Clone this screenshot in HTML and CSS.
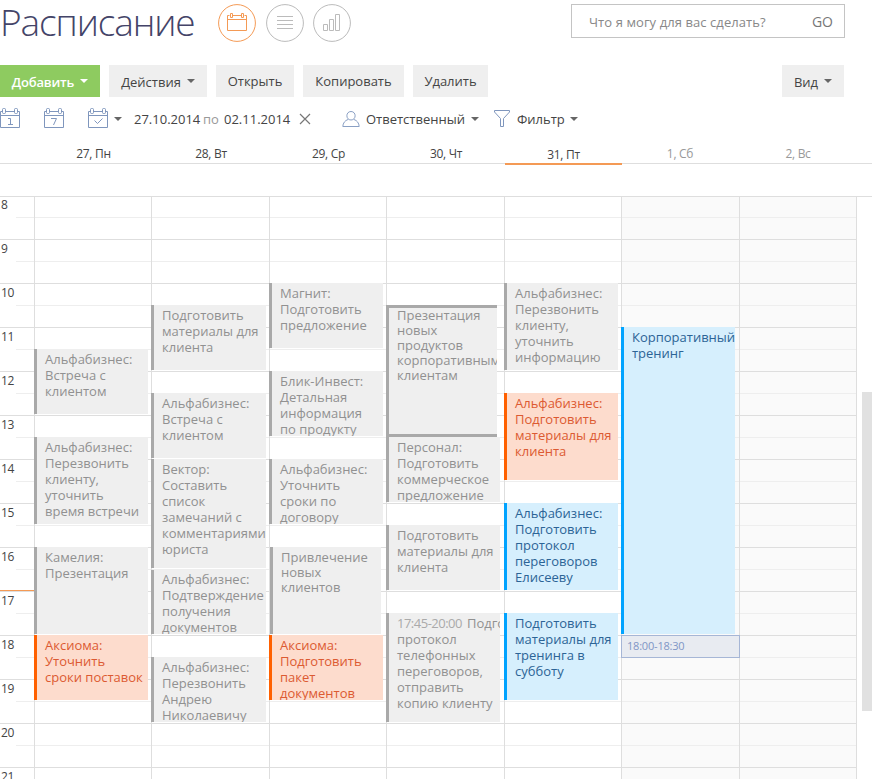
FILE: index.html
```html
<!DOCTYPE html>
<html lang="ru">
<head>
<meta charset="utf-8">
<title>Расписание</title>
<link rel="stylesheet" href="styles.css">
</head>
<body>
<div class="page">
  <header class="top">
    <h1 class="title">Расписание</h1>
    <nav class="views">
      <a class="view active"><svg width="38" height="38" viewBox="0 0 38 38"><circle cx="19" cy="19" r="18.4"/><path d="M11.500 11.500H9.500V26.500H28.500V11.500H26.500M14.500 11.500H23.500M9.500 15.500H28.500M12.500 9.500h2v4h-2zM23.500 9.500h2v4h-2z"/></svg></a>
      <a class="view"><svg width="38" height="38" viewBox="0 0 38 38"><circle cx="19" cy="19" r="18.400"/><path d="M11 12.500H27M11 16.500H27M11 20.500H27M11 24.500H27"/></svg></a>
      <a class="view"><svg width="38" height="38" viewBox="0 0 38 38"><circle cx="19" cy="19" r="18.400"/><path d="M10.500 20.500h4v6h-4zM16.500 15.500h4v11h-4zM22.500 10.500h4v16h-4z"/></svg></a>
    </nav>
    <div class="search"><span class="hint">Что я могу для вас сделать?</span><span class="go">GO</span></div>
  </header>

  <div class="actions">
    <button class="btn primary b1"><span>Добавить</span><i class="caret"></i></button>
    <button class="btn b2"><span>Действия</span><i class="caret"></i></button>
    <button class="btn b3">Открыть</button>
    <button class="btn b4">Копировать</button>
    <button class="btn b5">Удалить</button>
    <button class="btn view-btn"><span>Вид</span><i class="caret"></i></button>
  </div>

  <div class="filters">
    <svg class="cal" width="20" height="21" viewBox="0 0 20 21"><path d="M2.500 3.500H.5V19.500H19.500V3.500H17.500M5.500 3.500H14.500M.5 7.500H19.500M2.500 1.500q0-1 1-1h1q1 0 1 1v3q0 1-1 1h-1q-1 0-1-1zM14.500 1.500q0-1 1-1h1q1 0 1 1v3q0 1-1 1h-1q-1 0-1-1zM8 10.500h2.500V16.500M8 16.500h5"/></svg>
    <svg class="cal" width="20" height="21" viewBox="0 0 20 21"><path d="M2.500 3.500H.5V19.500H19.500V3.500H17.500M5.500 3.500H14.500M.5 7.500H19.500M2.500 1.500q0-1 1-1h1q1 0 1 1v3q0 1-1 1h-1q-1 0-1-1zM14.500 1.500q0-1 1-1h1q1 0 1 1v3q0 1-1 1h-1q-1 0-1-1zM7 10.500h5.500L9.500 17"/></svg>
    <svg class="cal last" width="20" height="21" viewBox="0 0 20 21"><path d="M2.500 3.500H.5V19.500H19.500V3.500H17.500M5.500 3.500H14.500M.5 7.500H19.500M2.500 1.500q0-1 1-1h1q1 0 1 1v3q0 1-1 1h-1q-1 0-1-1zM14.500 1.500q0-1 1-1h1q1 0 1 1v3q0 1-1 1h-1q-1 0-1-1zM6.500 12.500L9.500 15.500L14.500 10.500"/></svg>
    <i class="caret"></i>
    <span class="date from">27.10.2014</span>
    <span class="to">по</span>
    <span class="date until">02.11.2014</span>
    <svg class="clear" width="12" height="12" viewBox="0 0 12 12"><path d="M1 1L11 11M11 1L1 11"/></svg>
    <svg class="person" width="18" height="18" viewBox="0 0 18 18"><path d="M9 1.500c5.500 0 5.500 8.500 0 8.500s-5.500-8.500 0-8.500zM6 9.500C3 10.500 1 13 .8 16.500H17.200C17 13 15 10.500 12 9.500"/></svg>
    <span class="owner">Ответственный</span>
    <i class="caret"></i>
    <svg class="funnel" width="16" height="17" viewBox="0 0 16 17"><path d="M.5 .5H15.500V2L9.500 8.500V16.500H6.500V8.500L.5 2z"/></svg>
    <span class="filter">Фильтр</span>
    <i class="caret"></i>
  </div>

  <div class="days">
    <span></span><span>27, Пн</span><span>28, Вт</span><span>29, Ср</span><span>30, Чт</span><span class="today">31, Пт</span><span class="off">1, Сб</span><span class="off">2, Вс</span>
  </div>

  <div class="board">
    <div class="grid">
      <div class="hours">
        <span>8</span><span>9</span><span>10</span><span>11</span><span>12</span><span>13</span><span>14</span><span>15</span><span>16</span><span>17</span><span>18</span><span>19</span><span>20</span><span>21</span>
        <i class="now"></i>
      </div>
      <div class="day">
        <div class="ev r8 s3">Альфабизнес:<br>Встреча с<br>клиентом</div>
        <div class="ev r12 s4">Альфабизнес:<br>Перезвонить<br>клиенту,<br>уточнить<br>время встречи</div>
        <div class="ev r17 s4">Камелия:<br>Презентация</div>
        <div class="ev r21 s3 orange">Аксиома:<br>Уточнить<br>сроки поставок</div>
      </div>
      <div class="day">
        <div class="ev r6 s3">Подготовить<br>материалы для<br>клиента</div>
        <div class="ev r10 s3">Альфабизнес:<br>Встреча с<br>клиентом</div>
        <div class="ev r13 s5">Вектор:<br>Составить<br>список<br>замечаний с<br>комментариями<br>юриста</div>
        <div class="ev r18 s3 late">Альфабизнес:<br>Подтверждение<br>получения<br>документов</div>
        <div class="ev r22 s3">Альфабизнес:<br>Перезвонить<br>Андрею<br>Николаевичу</div>
      </div>
      <div class="day">
        <div class="ev r5 s3">Магнит:<br>Подготовить<br>предложение</div>
        <div class="ev r9 s3">Блик-Инвест:<br>Детальная<br>информация<br>по продукту</div>
        <div class="ev r13 s3">Альфабизнес:<br>Уточнить<br>сроки по<br>договору</div>
        <div class="ev r17 s4 inset">Привлечение<br>новых<br>клиентов</div>
        <div class="ev r21 s3 orange">Аксиома:<br>Подготовить<br>пакет<br>документов</div>
      </div>
      <div class="day wide">
        <div class="ev r6 s6 selected">Презентация<br>новых<br>продуктов<br>корпоративным<br>клиентам</div>
        <div class="ev r12 s3">Персонал:<br>Подготовить<br>коммерческое<br>предложение</div>
        <div class="ev r16 s3">Подготовить<br>материалы для<br>клиента</div>
        <div class="ev r20 s5"><span class="time">17:45-20:00</span>Подготовить<br>протокол<br>телефонных<br>переговоров,<br>отправить<br>копию клиенту</div>
      </div>
      <div class="day">
        <div class="ev r5 s4">Альфабизнес:<br>Перезвонить<br>клиенту,<br>уточнить<br>информацию</div>
        <div class="ev r10 s4 orange">Альфабизнес:<br>Подготовить<br>материалы для<br>клиента</div>
        <div class="ev r15 s4 blue">Альфабизнес:<br>Подготовить<br>протокол<br>переговоров<br>Елисееву</div>
        <div class="ev r20 s4 blue">Подготовить<br>материалы для<br>тренинга в<br>субботу</div>
      </div>
      <div class="day wide weekend">
        <div class="ev r7 s14 blue">Корпоративный<br>тренинг</div>
        <div class="slot r21">18:00-18:30</div>
      </div>
      <div class="day weekend last"></div>
    </div>
    <div class="track"><div class="thumb"></div></div>
  </div>
</div>
</body>
</html>
```
FILE: styles.css
```css
* { box-sizing: border-box; }
body { margin: 0; background: #fff; overflow: hidden; font-family: "Open Sans", "Noto Sans", sans-serif; font-size: 13px; color: #444; }
.page { width: 872px; height: 779px; overflow: hidden; display: flex; flex-direction: column; }
svg { display: block; flex: none; fill: none; }

.top { height: 65px; flex: none; display: flex; align-items: flex-start; }
.title { margin: 0; width: 218px; font-size: 37px; line-height: 44px; letter-spacing: -1.100px; font-weight: 300; color: #444468; white-space: nowrap; }
.views { display: flex; gap: 9px; padding-top: 4px; }
.view { width: 38.500px; stroke: #bbb; }
.view.active { stroke: #f49a55; }
.search { margin: 4px 27px 0 auto; width: 274px; height: 34px; border: 1px solid #c4c4c4; display: flex; align-items: center; justify-content: space-between; padding: 0 11px 0 17px; color: #888; white-space: nowrap; }
.hint { padding-top: 1px; letter-spacing: .08px; }
.go { color: #777; font-size: 14px; }

.actions { height: 32px; flex: none; display: flex; gap: 9px; padding-right: 28px; }
.btn { border: 0; padding: 0; height: 32px; background: #efefef; color: #444; font: inherit; display: flex; align-items: center; justify-content: center; gap: 6px; white-space: nowrap; }
.btn span { padding-top: 2px; }
.primary { background: #8ecb60; color: #fff; font-weight: 600; letter-spacing: -.2px; }
.primary .caret { border-top-color: #fff; }
.b1 { width: 100px; }
.b2 { width: 98px; }
.b3 { width: 78px; }
.b4 { width: 101px; }
.b5 { width: 75px; }
.view-btn { width: 62px; margin-left: auto; }
.caret { flex: none; width: 8px; height: 4px; border: 4px solid transparent; border-top-color: #666; border-bottom: 0; }

.filters { height: 44px; flex: none; display: flex; align-items: center; white-space: nowrap; }
.filters svg { margin-bottom: 1px; }
.filters .cal { stroke: #7f96bd; margin-right: 24px; margin-bottom: 2px; }
.filters .cal.last { margin-right: 6px; }
.date { width: 67px; }
.from { margin-left: 12px; width: 69px; }
.to { color: #999; width: 21px; }
.until { width: 75px; }
.clear { stroke: #777; stroke-width: 1.200; margin-right: 31px; }
.person { stroke: #8aa0c4; margin-right: 6px; }
.owner { width: 105px; }
.funnel { stroke: #7f96bd; margin: 0 7px 0 15px; }
.filter { width: 53px; }

.days, .grid { display: grid; grid-template-columns: 34px 117px 118px 117px 118px 117px 118px 118px; }
.days { height: 23px; flex: none; font-size: 12px; letter-spacing: -.3px; line-height: 26px; text-align: center; background: linear-gradient(#dedede, #dedede) 0 100% / 100% 1px no-repeat; }
.days span { height: 23px; padding-left: 2px; }
.days .today { height: 24px; margin: 0 -1px 0 1px; border-bottom: 2px solid #f49a55; line-height: 28px; padding: 0; }
.days .off { color: #999; padding-left: 0; }

.board { margin-top: 32px; height: 583px; border-top: 1px solid #dedede; display: flex; justify-content: space-between; overflow: hidden; }
.grid { width: 857px; height: 582px; }
.hours { display: grid; grid-template-rows: 42px; grid-auto-rows: 44px; height: 582px; font-size: 12px; letter-spacing: -.3px; line-height: 16px; position: relative;
  background: repeating-linear-gradient(transparent 0 42px, #dedede 42px 43px, transparent 43px 44px), repeating-linear-gradient(transparent 0 20px, #eee 20px 21px, transparent 21px 44px) 16px 0 no-repeat; }
.hours span { padding: 2px 0 0 1px; }
.hours span:first-child { padding-top: 0; }
.now { position: absolute; left: 0; top: 393px; width: 34px; height: 1px; background: #f49a55; }
.day { height: 582px; border-left: 1px solid #dedede; display: grid; grid-template-rows: 20px; grid-auto-rows: 22px; grid-template-columns: minmax(0, 1fr);
  background-image: repeating-linear-gradient(transparent 0 20px, #eee 20px 21px, transparent 21px 42px, #dedede 42px 43px, transparent 43px 44px); }
.weekend { background-color: #fafafa; }
.day.last { border-right: 1px solid #dedede; }

.ev { margin: 0 3px 1px -1px; padding: 2px 0 0 8px; border-left: 3px solid #a9a9a9; background: #efefef; color: #919191; line-height: 16px; overflow: hidden; white-space: nowrap; }
.wide .ev { margin-right: 4px; }
.orange { border-color: #ff6000; background: #fddccd; color: #dc5a32; }
.blue { border-color: #00a3ff; background: #d6effd; color: #2c6496; }
.late { margin-top: 1px; padding-top: 1px; }
.inset { margin-left: 0; margin-right: 5px; line-height: 15px; padding-top: 3px; }
.wide .selected { border-top: 3px solid #a9a9a9; border-bottom: 3px solid #a9a9a9; margin-right: 7px; margin-bottom: 0; padding-top: 0; line-height: 15px; }
.time { color: #aaa; margin-right: 5px; letter-spacing: -.5px; }
.slot { margin: 0 -1px -1px -1px; border: 1px solid #a6b6d6; background: #e8ebf1; color: #7f96c6; font-size: 11px; letter-spacing: -.2px; line-height: 20px; padding-left: 5px; z-index: 1; }

.r5 { grid-row-start: 5; } .r6 { grid-row-start: 6; } .r7 { grid-row-start: 7; } .r8 { grid-row-start: 8; }
.r9 { grid-row-start: 9; } .r10 { grid-row-start: 10; } .r12 { grid-row-start: 12; } .r13 { grid-row-start: 13; }
.r15 { grid-row-start: 15; } .r16 { grid-row-start: 16; } .r17 { grid-row-start: 17; } .r18 { grid-row-start: 18; }
.r20 { grid-row-start: 20; } .r21 { grid-row-start: 21; } .r22 { grid-row-start: 22; }
.s3 { grid-row-end: span 3; } .s4 { grid-row-end: span 4; } .s5 { grid-row-end: span 5; } .s6 { grid-row-end: span 6; } .s14 { grid-row-end: span 14; }

.track { width: 10px; padding-top: 195px; }
.thumb { height: 319px; background: #e1e1e1; }
```
